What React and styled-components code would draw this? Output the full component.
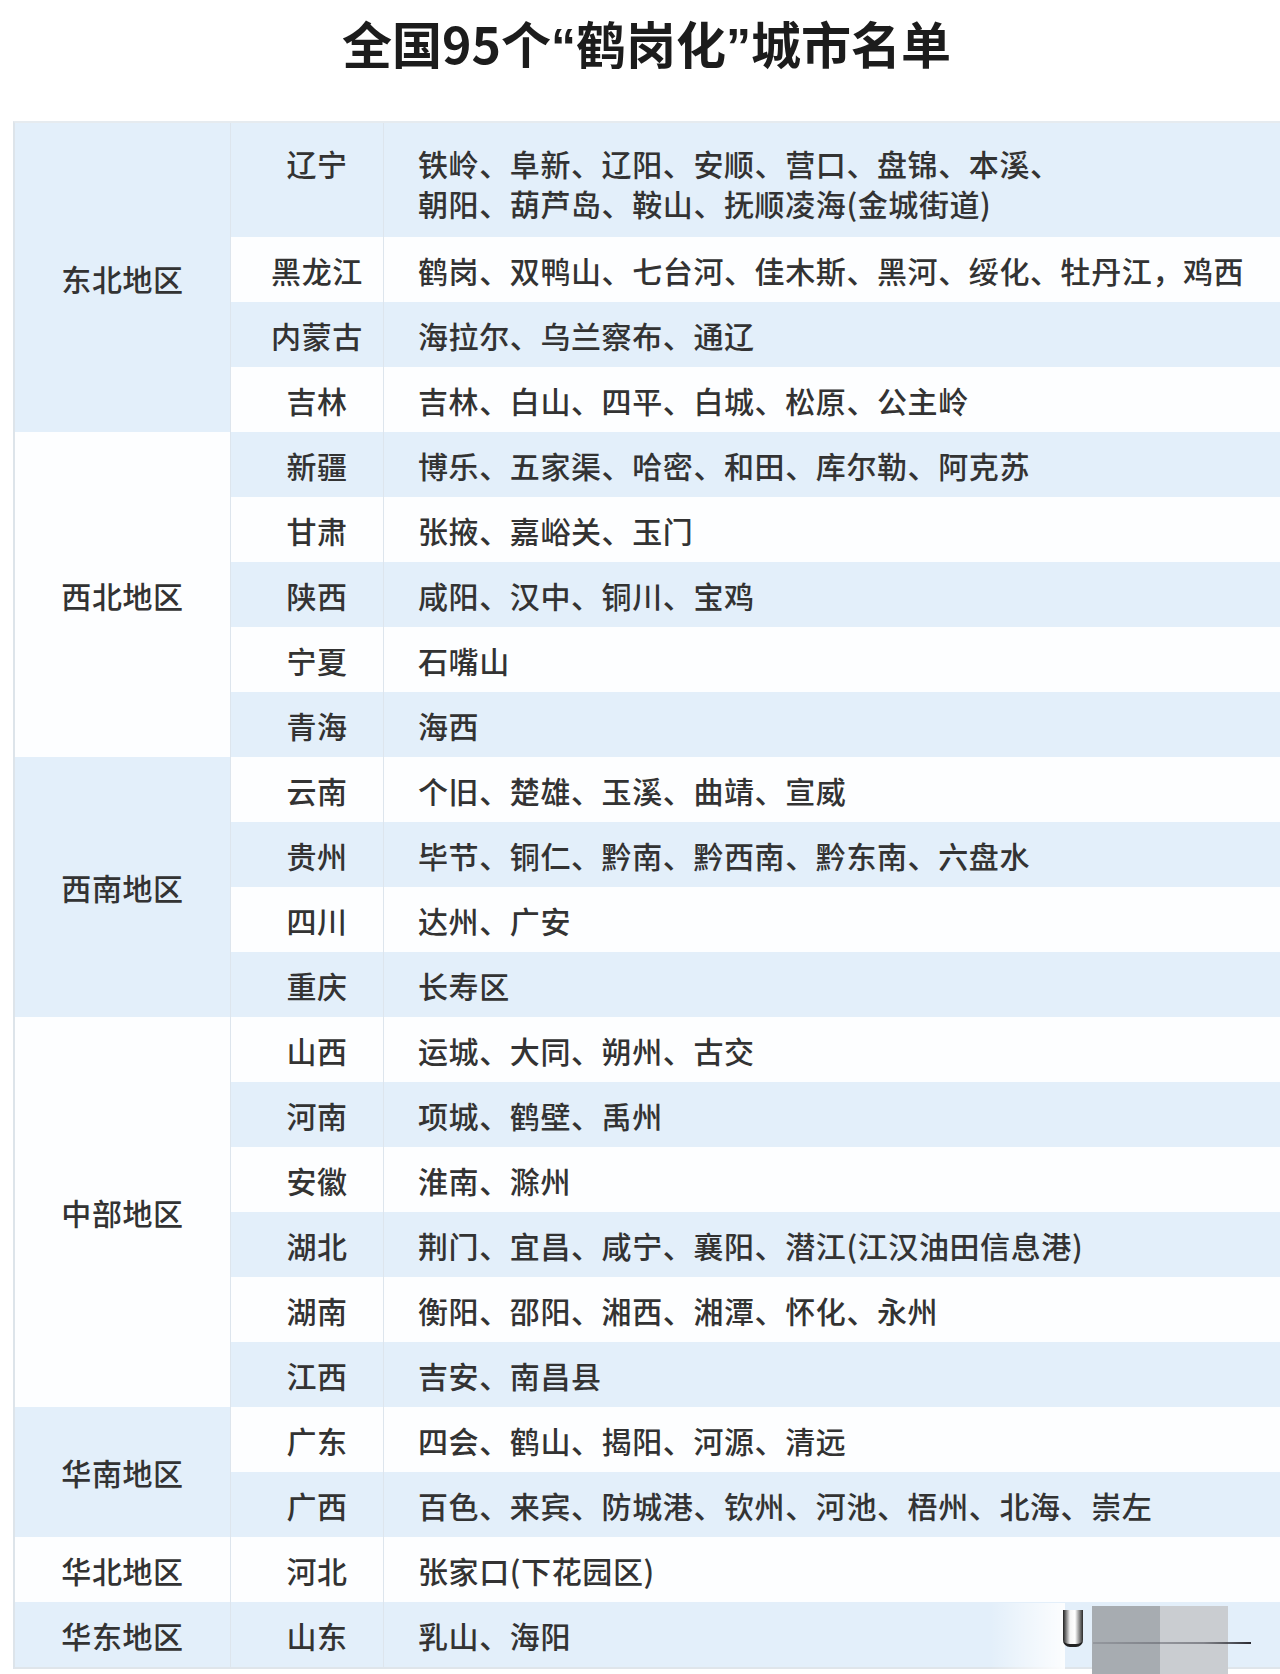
import React from 'react';
import styled, { createGlobalStyle } from 'styled-components';

const GlobalStyle = createGlobalStyle`
  html, body {
    margin: 0;
    padding: 0;
    background: #ffffff;
  }
  * {
    box-sizing: border-box;
  }
`

const Page = styled.div`
  position: relative;
  width: 1280px;
  height: 1674px;
  background: #ffffff;
  overflow: hidden;
  font-family: "Noto Sans CJK SC", "Noto Sans", sans-serif;
  color: #333333;
`

const Title = styled.h1`
  margin: 0 0 54px;
  padding: 17px 0 0 13px;
  height: 67px;
  font-size: 50px;
  line-height: 50px;
  font-weight: 700;
  text-align: center;
  color: #1c1c1c;
  letter-spacing: 0;
`

const Quote = styled.span`
  font-family: "Liberation Sans", sans-serif;
  font-weight: 700;
`

const Table = styled.div`
  display: flex;
  flex-direction: column;
  margin-left: 13px;
  border-left: 2px solid #dde4ea;
  border-top: 2px solid #e6ebef;
  border-bottom: 2px solid #dfe5ea;
`

const RegionGroup = styled.div`
  display: flex;
`

const RegionCell = styled.div`
  width: 216px;
  flex-shrink: 0;
  display: flex;
  align-items: center;
  justify-content: center;
  background: ${p => (p.$blue ? '#e3effa' : '#fdfeff')};
  border-right: 1px solid #dde5ed;
  font-size: 30px;
  line-height: 40px;
  font-weight: 500;
  letter-spacing: 0.6px;
`

const Rows = styled.div`
  flex: 1;
  display: flex;
  flex-direction: column;
`

const Row = styled.div`
  display: grid;
  grid-template-columns: 153px 1fr;
  height: ${p => (p.$tall ? '114px' : '65px')};
  align-items: ${p => (p.$tall ? 'start' : 'center')};
  background: ${p => (p.$blue ? '#e3effa' : '#fdfeff')};
`

const Province = styled.div`
  height: 100%;
  display: flex;
  align-items: ${p => (p.$tall ? 'flex-start' : 'center')};
  justify-content: center;
  padding: ${p => (p.$tall ? '20px 0 0 20px' : '0 0 0 20px')};
  border-right: 1px solid #dde5ed;
  font-size: 30px;
  line-height: 40px;
  font-weight: 500;
  letter-spacing: 0.6px;
`

const Cities = styled.div`
  padding: ${p => (p.$tall ? '20px 0 0 34px' : '0 0 0 34px')};
  font-size: 30px;
  line-height: 40px;
  font-weight: 500;
  letter-spacing: 0.6px;
  white-space: nowrap;
`

/* remains of a watermark in the lower right corner */
const Fade = styled.div`
  position: absolute;
  left: 990px;
  top: 1603px;
  width: 75px;
  height: 71px;
  background: linear-gradient(to right, rgba(255, 255, 255, 0), rgba(255, 255, 255, 0.9));
`

const Stub = styled.div`
  position: absolute;
  left: 1063px;
  top: 1610px;
  width: 20px;
  height: 37px;
  border-radius: 0 0 7px 7px;
  background: linear-gradient(to right, #1e1e1e, #f4f4f4 35%, #ffffff 60%, #2a2a2a);
  border-bottom: 3px solid #222;
`

const Block = styled.div`
  position: absolute;
  left: ${p => p.$left}px;
  top: 1606px;
  width: 68px;
  height: 68px;
  background: ${p => p.$color};
`

const Rule = styled.div`
  position: absolute;
  left: 1093px;
  top: 1642px;
  width: 158px;
  height: 2px;
  background: linear-gradient(to right, rgba(90, 90, 100, 0.25), rgba(60, 60, 70, 0.5) 70%, #2a2a30);
`

const regions = [
  {
    name: '东北地区',
    rows: [
      { p: '辽宁', c: ['铁岭、阜新、辽阳、安顺、营口、盘锦、本溪、', '朝阳、葫芦岛、鞍山、抚顺凌海(金城街道)'] },
      { p: '黑龙江', c: ['鹤岗、双鸭山、七台河、佳木斯、黑河、绥化、牡丹江，鸡西'] },
      { p: '内蒙古', c: ['海拉尔、乌兰察布、通辽'] },
      { p: '吉林', c: ['吉林、白山、四平、白城、松原、公主岭'] },
    ],
  },
  {
    name: '西北地区',
    rows: [
      { p: '新疆', c: ['博乐、五家渠、哈密、和田、库尔勒、阿克苏'] },
      { p: '甘肃', c: ['张掖、嘉峪关、玉门'] },
      { p: '陕西', c: ['咸阳、汉中、铜川、宝鸡'] },
      { p: '宁夏', c: ['石嘴山'] },
      { p: '青海', c: ['海西'] },
    ],
  },
  {
    name: '西南地区',
    rows: [
      { p: '云南', c: ['个旧、楚雄、玉溪、曲靖、宣威'] },
      { p: '贵州', c: ['毕节、铜仁、黔南、黔西南、黔东南、六盘水'] },
      { p: '四川', c: ['达州、广安'] },
      { p: '重庆', c: ['长寿区'] },
    ],
  },
  {
    name: '中部地区',
    rows: [
      { p: '山西', c: ['运城、大同、朔州、古交'] },
      { p: '河南', c: ['项城、鹤壁、禹州'] },
      { p: '安徽', c: ['淮南、滁州'] },
      { p: '湖北', c: ['荆门、宜昌、咸宁、襄阳、潜江(江汉油田信息港)'] },
      { p: '湖南', c: ['衡阳、邵阳、湘西、湘潭、怀化、永州'] },
      { p: '江西', c: ['吉安、南昌县'] },
    ],
  },
  {
    name: '华南地区',
    rows: [
      { p: '广东', c: ['四会、鹤山、揭阳、河源、清远'] },
      { p: '广西', c: ['百色、来宾、防城港、钦州、河池、梧州、北海、崇左'] },
    ],
  },
  {
    name: '华北地区',
    rows: [{ p: '河北', c: ['张家口(下花园区)'] }],
  },
  {
    name: '华东地区',
    rows: [{ p: '山东', c: ['乳山、海阳'] }],
  },
];

const App = () => {
  let index = 0;

  return (
    <Page>
      <GlobalStyle />
      <Title>
        全国95个<Quote>“</Quote>鹤岗化<Quote>”</Quote>城市名单
      </Title>
      <Table>
        {regions.map((region, r) => (
          <RegionGroup key={region.name}>
            <RegionCell $blue={r % 2 === 0}>{region.name}</RegionCell>
            <Rows>
              {region.rows.map(row => {
                const blue = index % 2 === 0;
                const tall = row.c.length > 1;
                index += 1;
                return (
                  <Row key={row.p} $blue={blue} $tall={tall}>
                    <Province $tall={tall}>{row.p}</Province>
                    <Cities $tall={tall}>
                      {row.c.map(line => (
                        <div key={line}>{line}</div>
                      ))}
                    </Cities>
                  </Row>
                );
              })}
            </Rows>
          </RegionGroup>
        ))}
      </Table>
      <Fade />
      <Stub />
      <Block $left={1092} $color="#a7acb1" />
      <Block $left={1160} $color="#cacdd1" />
      <Rule />
    </Page>
  );
};

export default App;
